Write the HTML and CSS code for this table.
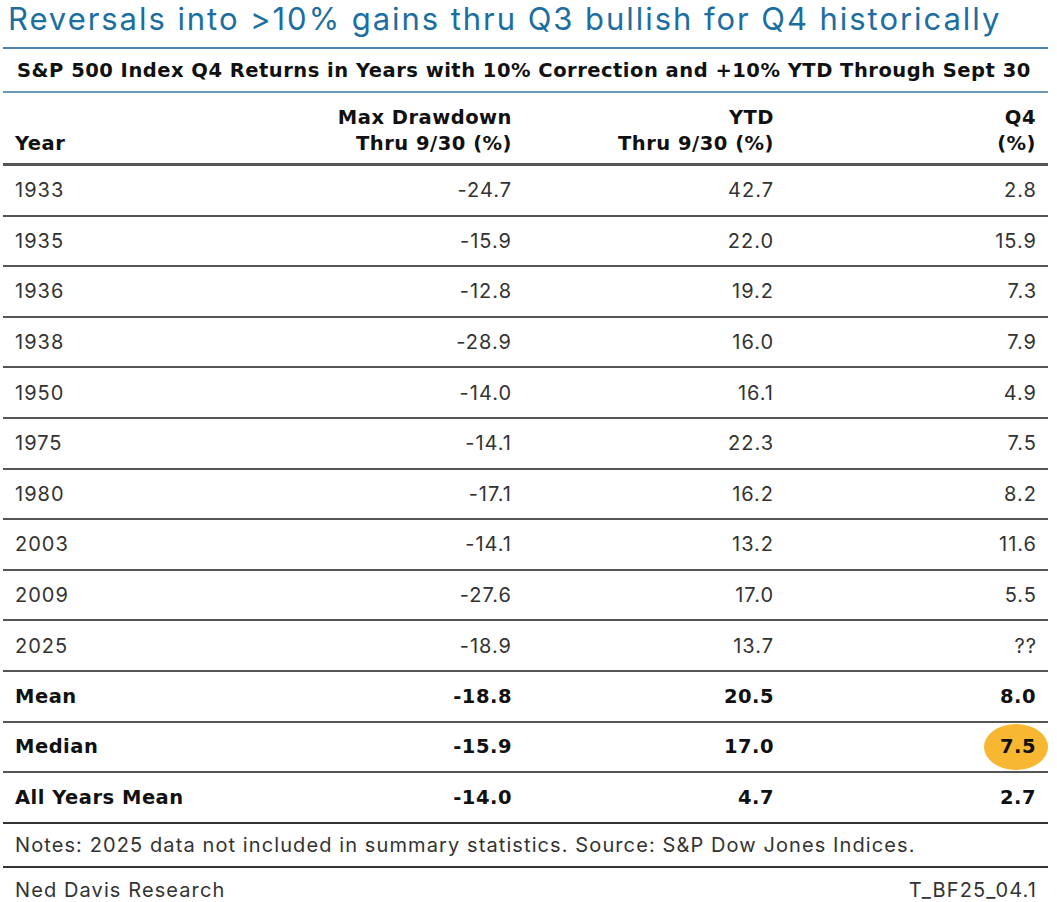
FILE: index.html
```html
<!DOCTYPE html>
<html>
<head>
<meta charset="utf-8">
<link rel="stylesheet" href="styles.css">
</head>
<body>
<div class="page">
  <h1 class="title">Reversals into &gt;10% gains thru Q3 bullish for Q4 historically</h1>
  <div class="subtitle">S&amp;P 500 Index Q4 Returns in Years with 10% Correction and +10% YTD Through Sept 30</div>
  <table class="data">
    <thead>
      <tr>
        <th class="year">Year</th>
        <th class="num c1">Max Drawdown<br>Thru 9/30 (%)</th>
        <th class="num c2">YTD<br>Thru 9/30 (%)</th>
        <th class="num c3">Q4<br>(%)</th>
      </tr>
    </thead>
    <tbody>
      <tr><td class="year">1933</td><td class="num">-24.7</td><td class="num">42.7</td><td class="num">2.8</td></tr>
      <tr><td class="year">1935</td><td class="num">-15.9</td><td class="num">22.0</td><td class="num">15.9</td></tr>
      <tr><td class="year">1936</td><td class="num">-12.8</td><td class="num">19.2</td><td class="num">7.3</td></tr>
      <tr><td class="year">1938</td><td class="num">-28.9</td><td class="num">16.0</td><td class="num">7.9</td></tr>
      <tr><td class="year">1950</td><td class="num">-14.0</td><td class="num">16.1</td><td class="num">4.9</td></tr>
      <tr><td class="year">1975</td><td class="num">-14.1</td><td class="num">22.3</td><td class="num">7.5</td></tr>
      <tr><td class="year">1980</td><td class="num">-17.1</td><td class="num">16.2</td><td class="num">8.2</td></tr>
      <tr><td class="year">2003</td><td class="num">-14.1</td><td class="num">13.2</td><td class="num">11.6</td></tr>
      <tr><td class="year">2009</td><td class="num">-27.6</td><td class="num">17.0</td><td class="num">5.5</td></tr>
      <tr><td class="year">2025</td><td class="num">-18.9</td><td class="num">13.7</td><td class="num">??</td></tr>
      <tr class="sum"><td class="year">Mean</td><td class="num">-18.8</td><td class="num">20.5</td><td class="num">8.0</td></tr>
      <tr class="sum"><td class="year">Median</td><td class="num">-15.9</td><td class="num">17.0</td><td class="num"><span class="hl">7.5</span></td></tr>
      <tr class="sum last"><td class="year">All Years Mean</td><td class="num">-14.0</td><td class="num">4.7</td><td class="num">2.7</td></tr>
    </tbody>
  </table>
  <div class="notes">Notes: 2025 data not included in summary statistics. Source: S&amp;P Dow Jones Indices.</div>
  <div class="footer">
    <span>Ned Davis Research</span>
    <span>T_BF25_04.1</span>
  </div>
</div>
</body>
</html>
```
FILE: styles.css
```css
html, body {
  margin: 0;
  padding: 0;
  background: #ffffff;
}
body {
  font-family: "Inter", "Liberation Sans", sans-serif;
  color: #333333;
}
.page {
  width: 1045px;
  margin-left: 3px;
}
.title {
  margin: 0;
  padding: 0 0 0 5px;
  height: 47px;
  line-height: 38px;
  font-size: 31px;
  font-weight: 400;
  letter-spacing: 1.95px;
  color: #1b6e9f;
  white-space: nowrap;
  border-bottom: 2px solid #4a86b0;
}
.subtitle {
  height: 42px;
  line-height: 44px;
  padding-left: 14px;
  font-family: "DejaVu Sans", sans-serif;
  font-size: 19.5px;
  font-weight: 700;
  letter-spacing: 0.5px;
  color: #111111;
  white-space: nowrap;
  border-bottom: 2px solid #6b98b8;
}
.data {
  width: 100%;
  border-collapse: collapse;
}
.data th {
  font-family: "DejaVu Sans", sans-serif;
  font-size: 19.5px;
  font-weight: 700;
  letter-spacing: 0.5px;
  color: #111111;
  line-height: 26px;
  vertical-align: bottom;
  padding: 10px 0 6px 0;
  border-bottom: 3px solid #555555;
  height: 54px;
}
.data td {
  font-size: 20px;
  letter-spacing: 1px;
  color: #333333;
  height: 48.6px;
  padding: 0;
  border-bottom: 2px solid #555555;
}
.data .year {
  text-align: left;
  padding-left: 12px;
}
.data .num {
  text-align: right;
}
.data td.num {
  padding-right: 0;
}
.data .c1, .data tr > td:nth-child(2) { width: 250px; }
.data .c2, .data tr > td:nth-child(3) { width: 262px; }
.data .c3, .data tr > td:nth-child(4) { width: 262px; }
.data td:nth-child(4), .data th:nth-child(4) { padding-right: 12px; }
.data td:nth-child(4) { padding-right: 11px; }
.data tr.sum td {
  font-family: "DejaVu Sans", sans-serif;
  font-size: 19.5px;
  font-weight: 700;
  letter-spacing: 0.5px;
  color: #111111;
}
.data tr.sum td:nth-child(4) { padding-right: 12px; }
.data tr.last td {
  border-bottom: 2px solid #333333;
}
.hl {
  display: inline-block;
  position: relative;
  z-index: 0;
}
.hl::before {
  content: "";
  position: absolute;
  left: 50%;
  top: 50%;
  width: 64px;
  height: 46px;
  margin-left: -34px;
  margin-top: -23px;
  background: #f7b731;
  border-radius: 50%;
  z-index: -1;
}
.notes {
  height: 42px;
  line-height: 42px;
  padding-left: 12px;
  font-size: 20px;
  letter-spacing: 1.1px;
  color: #333333;
  border-bottom: 2px solid #333333;
  white-space: nowrap;
}
.footer {
  display: flex;
  justify-content: space-between;
  height: 42px;
  line-height: 44px;
  padding: 0 11px 0 12px;
  font-size: 20px;
  letter-spacing: 1.1px;
  color: #333333;
}
```
